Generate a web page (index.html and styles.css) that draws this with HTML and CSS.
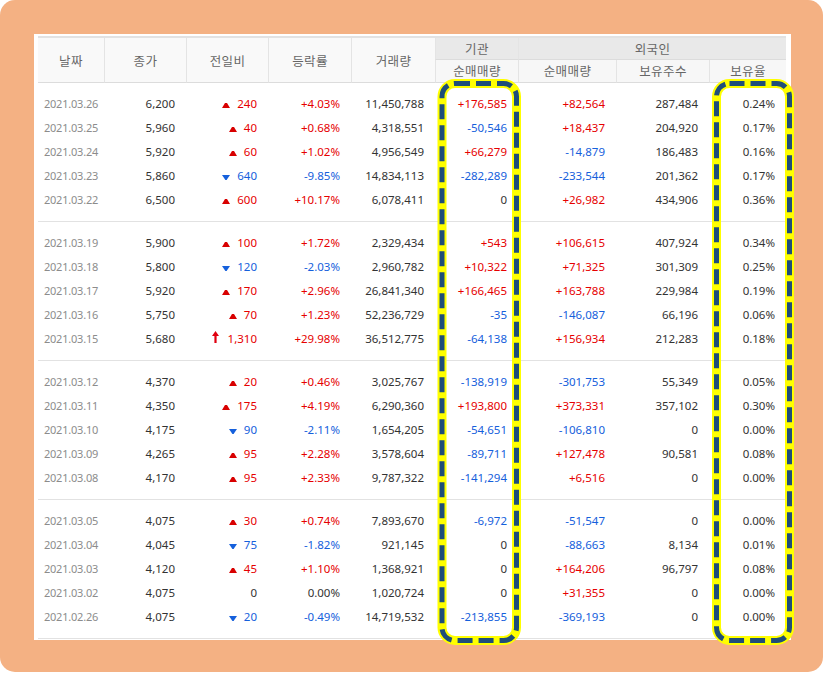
FILE: index.html
```html
<!DOCTYPE html>
<html lang="ko">
<head>
<meta charset="utf-8">
<title>일별 시세</title>
<link rel="stylesheet" href="styles.css">
</head>
<body>
<div class="frame">
  <div class="panel">
    <table class="quotes">
      <colgroup>
        <col class="c-date"><col class="c-close"><col class="c-diff"><col class="c-rate"><col class="c-vol">
        <col class="c-inst"><col class="c-frgn"><col class="c-hold"><col class="c-ratio">
      </colgroup>
      <thead>
        <tr>
          <th rowspan="2" class="th-main first">날짜</th>
          <th rowspan="2" class="th-main">종가</th>
          <th rowspan="2" class="th-main">전일비</th>
          <th rowspan="2" class="th-main">등락률</th>
          <th rowspan="2" class="th-main">거래량</th>
          <th class="th-group">기관</th>
          <th colspan="3" class="th-group">외국인</th>
        </tr>
        <tr>
          <th class="th-sub">순매매량</th>
          <th class="th-sub">순매매량</th>
          <th class="th-sub">보유주수</th>
          <th class="th-sub">보유율</th>
        </tr>
      </thead>
      <tbody>
        <tr class="first"><td class="date">2021.03.26</td><td>6,200</td><td class="red"><svg class="ico" viewBox="0 0 8 5"><polygon points="0,5 3,0 5,0 8,5"/></svg>240</td><td class="red">+4.03%</td><td>11,450,788</td><td class="red">+176,585</td><td class="red">+82,564</td><td>287,484</td><td>0.24%</td></tr>
        <tr><td class="date">2021.03.25</td><td>5,960</td><td class="red"><svg class="ico" viewBox="0 0 8 5"><polygon points="0,5 3,0 5,0 8,5"/></svg>40</td><td class="red">+0.68%</td><td>4,318,551</td><td class="blue">-50,546</td><td class="red">+18,437</td><td>204,920</td><td>0.17%</td></tr>
        <tr><td class="date">2021.03.24</td><td>5,920</td><td class="red"><svg class="ico" viewBox="0 0 8 5"><polygon points="0,5 3,0 5,0 8,5"/></svg>60</td><td class="red">+1.02%</td><td>4,956,549</td><td class="red">+66,279</td><td class="blue">-14,879</td><td>186,483</td><td>0.16%</td></tr>
        <tr><td class="date">2021.03.23</td><td>5,860</td><td class="blue"><svg class="ico" viewBox="0 0 8 5"><polygon points="0,0 8,0 4.6,5 3.4,5"/></svg>640</td><td class="blue">-9.85%</td><td>14,834,113</td><td class="blue">-282,289</td><td class="blue">-233,544</td><td>201,362</td><td>0.17%</td></tr>
        <tr class="last"><td class="date">2021.03.22</td><td>6,500</td><td class="red"><svg class="ico" viewBox="0 0 8 5"><polygon points="0,5 3,0 5,0 8,5"/></svg>600</td><td class="red">+10.17%</td><td>6,078,411</td><td>0</td><td class="red">+26,982</td><td>434,906</td><td>0.36%</td></tr>

        <tr class="first"><td class="date">2021.03.19</td><td>5,900</td><td class="red"><svg class="ico" viewBox="0 0 8 5"><polygon points="0,5 3,0 5,0 8,5"/></svg>100</td><td class="red">+1.72%</td><td>2,329,434</td><td class="red">+543</td><td class="red">+106,615</td><td>407,924</td><td>0.34%</td></tr>
        <tr><td class="date">2021.03.18</td><td>5,800</td><td class="blue"><svg class="ico" viewBox="0 0 8 5"><polygon points="0,0 8,0 4.6,5 3.4,5"/></svg>120</td><td class="blue">-2.03%</td><td>2,960,782</td><td class="red">+10,322</td><td class="red">+71,325</td><td>301,309</td><td>0.25%</td></tr>
        <tr><td class="date">2021.03.17</td><td>5,920</td><td class="red"><svg class="ico" viewBox="0 0 8 5"><polygon points="0,5 3,0 5,0 8,5"/></svg>170</td><td class="red">+2.96%</td><td>26,841,340</td><td class="red">+166,465</td><td class="red">+163,788</td><td>229,984</td><td>0.19%</td></tr>
        <tr><td class="date">2021.03.16</td><td>5,750</td><td class="red"><svg class="ico" viewBox="0 0 8 5"><polygon points="0,5 3,0 5,0 8,5"/></svg>70</td><td class="red">+1.23%</td><td>52,236,729</td><td class="blue">-35</td><td class="blue">-146,087</td><td>66,196</td><td>0.06%</td></tr>
        <tr class="last"><td class="date">2021.03.15</td><td>5,680</td><td class="red"><svg class="ico-limit" viewBox="0 0 7 12"><polygon points="3.5,0 7,5 4.6,5 4.6,12 2.4,12 2.4,5 0,5"/></svg>1,310</td><td class="red">+29.98%</td><td>36,512,775</td><td class="blue">-64,138</td><td class="red">+156,934</td><td>212,283</td><td>0.18%</td></tr>

        <tr class="first"><td class="date">2021.03.12</td><td>4,370</td><td class="red"><svg class="ico" viewBox="0 0 8 5"><polygon points="0,5 3,0 5,0 8,5"/></svg>20</td><td class="red">+0.46%</td><td>3,025,767</td><td class="blue">-138,919</td><td class="blue">-301,753</td><td>55,349</td><td>0.05%</td></tr>
        <tr><td class="date">2021.03.11</td><td>4,350</td><td class="red"><svg class="ico" viewBox="0 0 8 5"><polygon points="0,5 3,0 5,0 8,5"/></svg>175</td><td class="red">+4.19%</td><td>6,290,360</td><td class="red">+193,800</td><td class="red">+373,331</td><td>357,102</td><td>0.30%</td></tr>
        <tr><td class="date">2021.03.10</td><td>4,175</td><td class="blue"><svg class="ico" viewBox="0 0 8 5"><polygon points="0,0 8,0 4.6,5 3.4,5"/></svg>90</td><td class="blue">-2.11%</td><td>1,654,205</td><td class="blue">-54,651</td><td class="blue">-106,810</td><td>0</td><td>0.00%</td></tr>
        <tr><td class="date">2021.03.09</td><td>4,265</td><td class="red"><svg class="ico" viewBox="0 0 8 5"><polygon points="0,5 3,0 5,0 8,5"/></svg>95</td><td class="red">+2.28%</td><td>3,578,604</td><td class="blue">-89,711</td><td class="red">+127,478</td><td>90,581</td><td>0.08%</td></tr>
        <tr class="last"><td class="date">2021.03.08</td><td>4,170</td><td class="red"><svg class="ico" viewBox="0 0 8 5"><polygon points="0,5 3,0 5,0 8,5"/></svg>95</td><td class="red">+2.33%</td><td>9,787,322</td><td class="blue">-141,294</td><td class="red">+6,516</td><td>0</td><td>0.00%</td></tr>

        <tr class="first"><td class="date">2021.03.05</td><td>4,075</td><td class="red"><svg class="ico" viewBox="0 0 8 5"><polygon points="0,5 3,0 5,0 8,5"/></svg>30</td><td class="red">+0.74%</td><td>7,893,670</td><td class="blue">-6,972</td><td class="blue">-51,547</td><td>0</td><td>0.00%</td></tr>
        <tr><td class="date">2021.03.04</td><td>4,045</td><td class="blue"><svg class="ico" viewBox="0 0 8 5"><polygon points="0,0 8,0 4.6,5 3.4,5"/></svg>75</td><td class="blue">-1.82%</td><td>921,145</td><td>0</td><td class="blue">-88,663</td><td>8,134</td><td>0.01%</td></tr>
        <tr><td class="date">2021.03.03</td><td>4,120</td><td class="red"><svg class="ico" viewBox="0 0 8 5"><polygon points="0,5 3,0 5,0 8,5"/></svg>45</td><td class="red">+1.10%</td><td>1,368,921</td><td>0</td><td class="red">+164,206</td><td>96,797</td><td>0.08%</td></tr>
        <tr><td class="date">2021.03.02</td><td>4,075</td><td>0</td><td>0.00%</td><td>1,020,724</td><td>0</td><td class="red">+31,355</td><td>0</td><td>0.00%</td></tr>
        <tr class="last"><td class="date">2021.02.26</td><td>4,075</td><td class="blue"><svg class="ico" viewBox="0 0 8 5"><polygon points="0,0 8,0 4.6,5 3.4,5"/></svg>20</td><td class="blue">-0.49%</td><td>14,719,532</td><td class="blue">-213,855</td><td class="blue">-369,193</td><td>0</td><td>0.00%</td></tr>
      </tbody>
    </table>
  </div>
  <svg class="marks" width="823" height="672" viewBox="0 0 823 672" aria-hidden="true">
    <g fill="none">
      <rect x="442" y="83.5" width="74.5" height="557" rx="13" stroke="#ffff00" stroke-width="9"/>
      <rect x="442" y="83.5" width="74.5" height="557" rx="13" stroke="#1f4e79" stroke-width="5" stroke-dasharray="15 6"/>
      <rect x="716.5" y="83.5" width="73" height="557" rx="13" stroke="#ffff00" stroke-width="9"/>
      <rect x="716.5" y="83.5" width="73" height="557" rx="13" stroke="#1f4e79" stroke-width="5" stroke-dasharray="15 6"/>
    </g>
  </svg>
</div>
</body>
</html>
```

FILE: styles.css
```css
body {
  margin: 0;
  background: #ffffff;
}

.frame {
  position: relative;
  width: 823px;
  height: 672px;
  box-sizing: border-box;
  padding: 34px 0 0 34px;
  background: #f4b183;
  border-radius: 15px;
}

.panel {
  width: 757px;
  height: 606px;
  box-sizing: border-box;
  padding: 2px 0 0 4px;
  background: #ffffff;
}

.quotes {
  width: 748px;
  table-layout: fixed;
  border-collapse: separate;
  border-spacing: 0;
  border-top: 2px solid #e2e2e2;
  font-family: "Noto Sans", "DejaVu Sans", sans-serif;
}

.c-date { width: 66px; }
.c-close { width: 82px; }
.c-diff { width: 82px; }
.c-rate { width: 83px; }
.c-vol { width: 84px; }
.c-inst { width: 83px; }
.c-frgn { width: 98px; }
.c-hold { width: 93px; }
.c-ratio { width: 77px; }

.quotes th {
  padding: 0;
  font-family: "Noto Sans CJK KR", "Noto Sans", sans-serif;
  font-size: 12.5px;
  font-weight: normal;
  letter-spacing: 0.4px;
  color: #666666;
  text-align: center;
  border-left: 1px solid #e4e4e4;
  border-bottom: 1px solid #dcdcdc;
}

.quotes th.first {
  border-left: 0;
}

.th-main {
  background: #f9f9f9;
}

.th-group {
  height: 21px;
  line-height: 21px;
  background: #e9e9e9;
}

.th-sub {
  height: 22px;
  line-height: 22px;
  background: #f7f7f7;
}

.quotes td {
  padding: 0 11px 0 0;
  line-height: 24px;
  font-size: 11.5px;
  color: #333333;
  text-align: right;
  white-space: nowrap;
}

.quotes td.date {
  padding: 0;
  text-align: center;
  font-size: 11px;
  letter-spacing: -0.2px;
  color: #8c8c8c;
}

.quotes tr.first td {
  padding-top: 9px;
}

.quotes tr.last td {
  padding-bottom: 9px;
  border-bottom: 1px solid #e2e2e2;
}

.quotes td.red {
  color: #e60000;
}

.quotes td.blue {
  color: #1560dc;
}

.ico {
  display: inline-block;
  width: 8px;
  height: 5px;
  margin-right: 7px;
  vertical-align: 0;
  fill: currentColor;
}

.red .ico {
  fill: #d80000;
}

.blue .ico {
  fill: #1560dc;
}

.ico-limit {
  display: inline-block;
  width: 7px;
  height: 12px;
  margin-right: 9px;
  vertical-align: 0;
  fill: #e00010;
}

.marks {
  position: absolute;
  left: 0;
  top: 0;
  pointer-events: none;
}
```
